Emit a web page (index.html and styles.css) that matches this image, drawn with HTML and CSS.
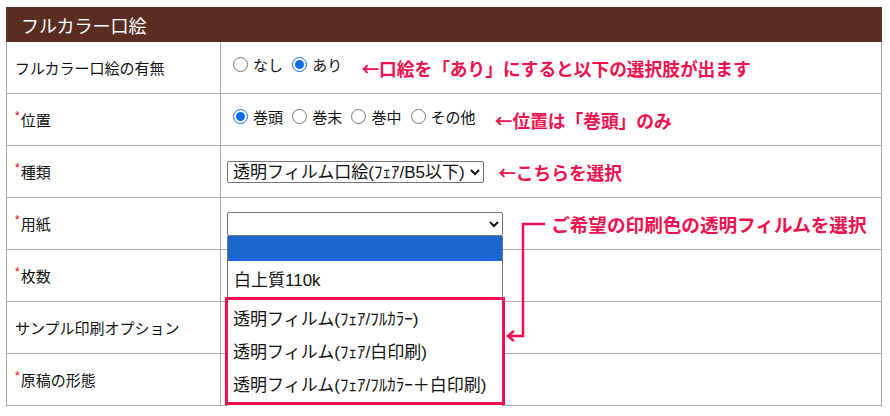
FILE: index.html
```html
<!DOCTYPE html>
<html lang="ja">
<head>
  <meta charset="UTF-8">
  <title>フルカラー口絵</title>
  <link rel="stylesheet" href="styles.css">
</head>
<body>
  <table class="form">
    <tr>
      <th colspan="2" class="form-head">フルカラー口絵</th>
    </tr>
    <tr>
      <td class="label">フルカラー口絵の有無</td>
      <td class="field">
        <label class="radio"><input type="radio" name="kuchie">なし</label>
        <label class="radio"><input type="radio" name="kuchie" checked>あり</label>
        <span class="note">←口絵を「あり」にすると以下の選択肢が出ます</span>
      </td>
    </tr>
    <tr>
      <td class="label"><span class="req">*</span>位置</td>
      <td class="field">
        <label class="radio"><input type="radio" name="pos" checked>巻頭</label>
        <label class="radio"><input type="radio" name="pos">巻末</label>
        <label class="radio"><input type="radio" name="pos">巻中</label>
        <label class="radio"><input type="radio" name="pos">その他</label>
        <span class="note">←位置は「巻頭」のみ</span>
      </td>
    </tr>
    <tr>
      <td class="label"><span class="req">*</span>種類</td>
      <td class="field">
        <select class="select">
          <option>透明フィルム口絵(ﾌｪｱ/B5以下)</option>
        </select>
        <span class="note">←こちらを選択</span>
      </td>
    </tr>
    <tr>
      <td class="label"><span class="req">*</span>用紙</td>
      <td class="field field-paper">
        <div class="picker">
          <select class="select select-wide">
            <option></option>
          </select>
          <div class="dropdown">
            <div class="opt opt-active"></div>
            <div class="opt opt-tall">白上質110k</div>
            <div class="pick-group">
              <div class="opt">透明フィルム(ﾌｪｱ/ﾌﾙｶﾗｰ)</div>
              <div class="opt">透明フィルム(ﾌｪｱ/白印刷)</div>
              <div class="opt">透明フィルム(ﾌｪｱ/ﾌﾙｶﾗｰ＋白印刷)</div>
            </div>
          </div>
        </div>
        <span class="note note-big">ご希望の印刷色の透明フィルムを選択</span>
        <svg class="connector" width="44" height="120" viewBox="0 0 44 120">
          <path d="M40 2 H18 V114 H4" fill="none" stroke="#f0104f" stroke-width="2.5"/>
          <path d="M9 109 L3 114 L9 119" fill="none" stroke="#f0104f" stroke-width="2.5"/>
        </svg>
      </td>
    </tr>
    <tr>
      <td class="label"><span class="req">*</span>枚数</td>
      <td class="field"></td>
    </tr>
    <tr>
      <td class="label">サンプル印刷オプション</td>
      <td class="field"></td>
    </tr>
    <tr>
      <td class="label"><span class="req">*</span>原稿の形態</td>
      <td class="field"></td>
    </tr>
  </table>
</body>
</html>
```

FILE: styles.css
```css
body {
  margin: 7px 6px;
  font-family: "Liberation Sans", "Noto Sans CJK JP", sans-serif;
  color: #111;
  background: #fff;
}
.form {
  width: 876px;
  border-collapse: collapse;
  border: 1px solid #ababab;
}
.form-head {
  height: 33px;
  padding: 0 0 0 14px;
  background-color: #5a2d22;
  color: #fff;
  font-size: 18px;
  font-weight: normal;
  text-align: left;
  border: 1px solid #5a2d22;
}
.form td {
  height: 51px;
  border: 1px solid #ababab;
  vertical-align: middle;
  font-size: 15px;
}
.label {
  width: 205px;
  padding: 0 0 0 8px;
}
.req {
  color: #e00;
  font-size: 12px;
  vertical-align: top;
  margin-right: 1px;
}
.field {
  padding: 0 6px;
  white-space: nowrap;
}
.radio {
  display: inline-flex;
  align-items: center;
  margin-right: 5px;
}
.radio:first-child {
  margin-left: 6px;
}
.radio input {
  width: 15px;
  height: 15px;
  margin: 0 5px 0 0;
  accent-color: #0b6cf0;
}
.note {
  margin-left: 10px;
  color: #f0104f;
  font-family: "Noto Sans CJK JP", sans-serif;
  font-weight: bold;
  font-size: 17.7px;
  vertical-align: middle;
}
.select {
  height: 22px;
  padding: 0 1px;
  font-family: "Liberation Sans", "Noto Sans CJK JP", sans-serif;
  font-size: 17px;
  color: #111;
  background: #fff;
  border: 1px solid #767676;
  border-radius: 2px;
  vertical-align: middle;
}
.select-wide {
  width: 276px;
  height: 24px;
  box-shadow: 0 3px 3px -2px rgba(0, 0, 0, 0.12);
}

/* open dropdown of 用紙 */
.field-paper {
  position: relative;
}
.picker {
  display: inline-block;
  position: relative;
  vertical-align: middle;
}
.dropdown {
  position: absolute;
  top: 100%;
  left: 0;
  width: 274px;
  background: #fff;
  border: 1px solid #767676;
  border-top: none;
  z-index: 2;
  padding-bottom: 1px;
}
.opt {
  height: 33px;
  display: flex;
  align-items: center;
  padding-left: 6px;
  font-size: 17px;
}
.opt-active {
  height: 25px;
  background-color: #1a67d2;
}
.opt-tall {
  height: 36px;
}
.pick-group {
  margin: 0 -3px 0 -3px;
  padding: 1px 0 2px 0;
  border: 3px solid #f0104f;
}
.pick-group .opt {
  padding-left: 5px;
}
.note-big {
  margin-left: 44px;
  font-size: 18.6px;
}
.connector {
  position: absolute;
  left: 284px;
  top: 24px;
}
```
